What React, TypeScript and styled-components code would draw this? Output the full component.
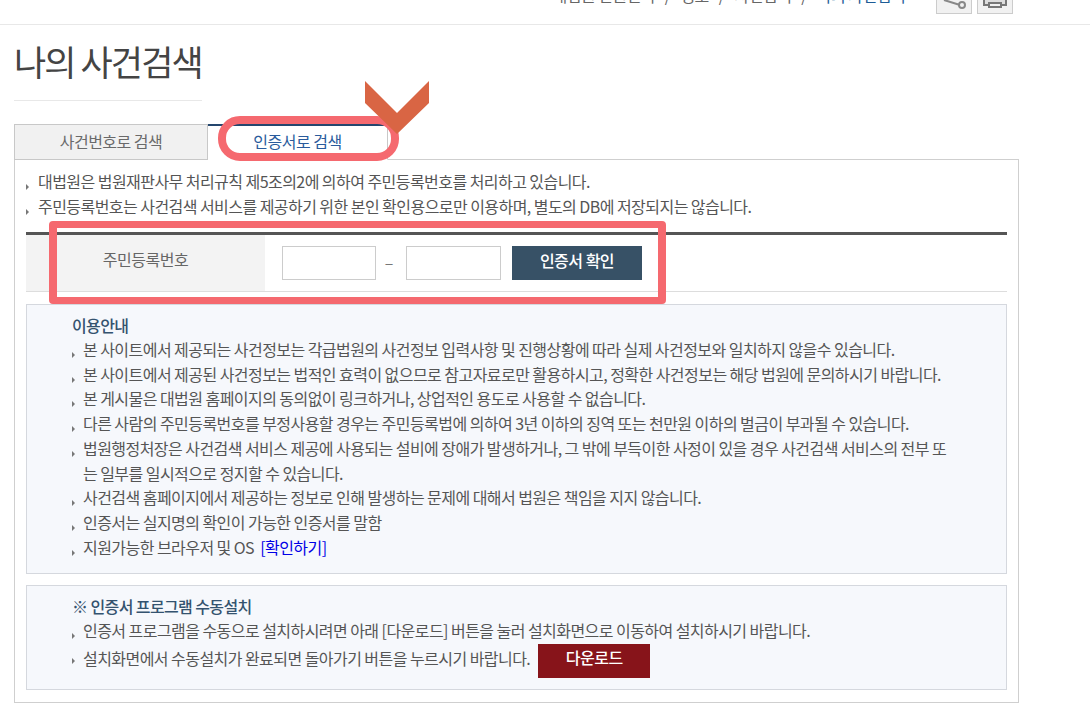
import React from "react";
import styled, { createGlobalStyle } from "styled-components";

const GlobalStyle = createGlobalStyle`
  html, body {
    margin: 0;
    padding: 0;
    background: #fff;
    overflow: hidden;
  }
  body {
    font-family: "Noto Sans CJK KR", "Noto Sans", sans-serif;
    color: #555;
  }
  * { box-sizing: border-box; }
`;

const Page = styled.div`
  position: relative;
  width: 1090px;
  height: 720px;
  overflow: hidden;
`;

const TopBar = styled.div`
  height: 25px;
  border-bottom: 1px solid #e8e8e8;
  padding: 0 77px 10px 0;
  display: flex;
  justify-content: flex-end;
  align-items: flex-end;
  overflow: hidden;
`;

const Crumbs = styled.div`
  display: flex;
  gap: 10px;
  margin: 0 26px 9px 0;
  font-size: 16px;
  line-height: 20px;
  letter-spacing: -0.55px;
  color: #666;
`;

const CrumbNow = styled.span`
  color: #1d5c96;
`;

const IconButton = styled.div`
  width: 36px;
  height: 32px;
  margin-left: 5px;
  flex: none;
  background: #f1f1f1;
  border: 1px solid #ccc;
  display: flex;
  align-items: flex-end;
  justify-content: center;
  padding-bottom: 2px;
`;

const Main = styled.main`
  width: 1005px;
  margin-left: 14px;
`;

const Title = styled.h1`
  width: 188px;
  height: 76px;
  margin: 0 0 23px;
  padding-top: 13px;
  border-bottom: 1px solid #e8e8e8;
  font-size: 35px;
  line-height: 46px;
  font-weight: 400;
  letter-spacing: -1.9px;
  white-space: nowrap;
  color: #444;
`;

const Tabs = styled.div`
  display: flex;
  height: 36px;
  margin-bottom: -1px;
`;

const Tab = styled.div<{ $active?: boolean }>`
  width: ${(p) => (p.$active ? "180px" : "194px")};
  height: 36px;
  display: flex;
  align-items: center;
  justify-content: center;
  padding-bottom: ${(p) => (p.$active ? "4px" : "3px")};
  font-size: 16px;
  letter-spacing: -0.5px;
  color: ${(p) => (p.$active ? "#2a5b9c" : "#6a6a6a")};
  background: ${(p) => (p.$active ? "#fff" : "#f1f1f1")};
  border: 1px solid #c8c8c8;
  border-top: ${(p) => (p.$active ? "2px solid #24466e" : "1px solid #c8c8c8")};
  border-left: ${(p) => (p.$active ? "0" : "1px solid #c8c8c8")};
  border-bottom: ${(p) => (p.$active ? "1px solid #fff" : "1px solid #c8c8c8")};
  position: relative;
  z-index: 1;
`;

const Panel = styled.section`
  height: 544px;
  border: 1px solid #cfcfcf;
  padding: 9px 11px 0;
`;

const List = styled.ul`
  list-style: none;
  margin: 0;
  padding: 0;
`;

const Item = styled.li<{ $gap?: number; $line?: number }>`
  display: flex;
  font-size: 16px;
  line-height: ${(p) => p.$line ?? 24.7}px;
  letter-spacing: -0.55px;
  color: #555;
  white-space: nowrap;

  &::before {
    content: "";
    flex: none;
    width: 0;
    height: 0;
    margin: 15px ${(p) => p.$gap ?? 8}px 0 0;
    border-left: 3px solid #777;
    border-top: 3px solid transparent;
    border-bottom: 3px solid transparent;
  }
`;

const FormRow = styled.div`
  display: flex;
  height: 60px;
  margin-top: 13px;
  border-top: 3px solid #555;
  border-bottom: 1px solid #ddd;
`;

const RowHead = styled.div`
  width: 239px;
  display: flex;
  align-items: center;
  justify-content: center;
  padding-bottom: 8px;
  background: #f3f3f3;
  font-size: 16px;
  letter-spacing: -0.5px;
  color: #666;
`;

const RowBody = styled.div`
  display: flex;
  align-items: center;
  padding: 0 0 0 17px;
`;

const NumberInput = styled.input<{ $w: number }>`
  width: ${(p) => p.$w}px;
  height: 34px;
  background: #fff;
  border: 1px solid #ccc;
  outline: none;
`;

const Dash = styled.span`
  width: 30px;
  padding: 0 4px 2px 0;
  text-align: center;
  font-size: 16px;
  color: #777;
`;

const DarkButton = styled.button<{ $bg: string; $w: number }>`
  width: ${(p) => p.$w}px;
  height: 34px;
  border: 0;
  padding: 0 0 7px;
  background: ${(p) => p.$bg};
  color: #fff;
  font-family: inherit;
  font-size: 16px;
  font-weight: 500;
  letter-spacing: -0.5px;
`;

const ConfirmButton = styled(DarkButton)`
  margin-left: 11px;
`;

const InfoBox = styled.div<{ $h: number }>`
  height: ${(p) => p.$h}px;
  background: #f6f8fc;
  border: 1px solid #d5d8de;
  padding: 8px 0 0 45px;
  margin-top: ${(p) => (p.$h > 200 ? "12px" : "11px")};
`;

const BoxTitle = styled.h3`
  margin: 0;
  font-size: 16px;
  line-height: 24px;
  font-weight: 500;
  letter-spacing: -0.6px;
  color: #34536f;
`;

const SourceLink = styled.a`
  margin-left: 6px;
  color: #0000e6;
  text-decoration: none;
`;

const InlineButtonRow = styled.div`
  display: flex;
  align-items: flex-start;
  height: 34px;
`;

const InlineText = styled.span`
  padding-top: 3px;
`;

const DownloadButton = styled(DarkButton)`
  margin: 1px 0 0 8px;
`;

const TabMark = styled.div`
  position: absolute;
  left: 218px;
  top: 116px;
  width: 181px;
  height: 45px;
  border: 8px solid #f5696f;
  border-radius: 22px;
  z-index: 2;
`;

const RowMark = styled.div`
  position: absolute;
  left: 49px;
  top: 221px;
  width: 617px;
  height: 83px;
  border: 7px solid #f5696f;
  border-width: 7px 8px;
  border-radius: 4px;
  z-index: 2;
`;

const Chevron = styled.svg`
  position: absolute;
  left: 365px;
  top: 81px;
  z-index: 3;
`;

const guideItems = [
  "본 사이트에서 제공되는 사건정보는 각급법원의 사건정보 입력사항 및 진행상황에 따라 실제 사건정보와 일치하지 않을수 있습니다.",
  "본 사이트에서 제공된 사건정보는 법적인 효력이 없으므로 참고자료로만 활용하시고, 정확한 사건정보는 해당 법원에 문의하시기 바랍니다.",
  "본 게시물은 대법원 홈페이지의 동의없이 링크하거나, 상업적인 용도로 사용할 수 없습니다.",
  "다른 사람의 주민등록번호를 부정사용할 경우는 주민등록법에 의하여 3년 이하의 징역 또는 천만원 이하의 벌금이 부과될 수 있습니다.",
];

const guideItemsAfter = [
  "사건검색 홈페이지에서 제공하는 정보로 인해 발생하는 문제에 대해서 법원은 책임을 지지 않습니다.",
  "인증서는 실지명의 확인이 가능한 인증서를 말함",
];

const App: React.FC = () => {
  return (
    <Page>
      <GlobalStyle />
      <TopBar>
        <Crumbs>
          <span>대법원 민원센터</span>
          <span>/</span>
          <span>정보</span>
          <span>/</span>
          <span>사건검색</span>
          <span>/</span>
          <CrumbNow>나의 사건검색</CrumbNow>
        </Crumbs>
        <IconButton>
          <svg width="26" height="12" viewBox="0 0 26 12" fill="none" stroke="#888" strokeWidth="2">
            <path d="M3 1 L19 6" />
            <circle cx="21" cy="6" r="3" fill="#f1f1f1" />
          </svg>
        </IconButton>
        <IconButton>
          <svg width="24" height="12" viewBox="0 0 24 12" fill="none" stroke="#777" strokeWidth="2">
            <path d="M1 0 V6 H23 V0" fill="#ddd" />
            <rect x="6" y="4" width="12" height="4" fill="#f1f1f1" />
          </svg>
        </IconButton>
      </TopBar>

      <Main>
        <Title>나의 사건검색</Title>
        <Tabs>
          <Tab>사건번호로 검색</Tab>
          <Tab $active>인증서로 검색</Tab>
        </Tabs>
        <Panel>
          <List>
            <Item $line={25} $gap={9}>대법원은 법원재판사무 처리규칙 제5조의2에 의하여 주민등록번호를 처리하고 있습니다.</Item>
            <Item $line={25} $gap={9}>주민등록번호는 사건검색 서비스를 제공하기 위한 본인 확인용으로만 이용하며, 별도의 DB에 저장되지는 않습니다.</Item>
          </List>
          <FormRow>
            <RowHead>주민등록번호</RowHead>
            <RowBody>
              <NumberInput $w={94} />
              <Dash>–</Dash>
              <NumberInput $w={95} />
              <ConfirmButton $bg="#375166" $w={130}>인증서 확인</ConfirmButton>
            </RowBody>
          </FormRow>

          <InfoBox $h={270}>
            <BoxTitle>이용안내</BoxTitle>
            <List>
              {guideItems.map((text) => (
                <Item key={text}>{text}</Item>
              ))}
              <Item>
                <span>
                  법원행정처장은 사건검색 서비스 제공에 사용되는 설비에 장애가 발생하거나, 그 밖에 부득이한 사정이 있을 경우 사건검색 서비스의 전부 또
                  <br />는 일부를 일시적으로 정지할 수 있습니다.
                </span>
              </Item>
              {guideItemsAfter.map((text) => (
                <Item key={text}>{text}</Item>
              ))}
              <Item>
                <span>
                  지원가능한 브라우저 및 OS
                  <SourceLink href="#">[확인하기]</SourceLink>
                </span>
              </Item>
            </List>
          </InfoBox>

          <InfoBox $h={105}>
            <BoxTitle>※ 인증서 프로그램 수동설치</BoxTitle>
            <List>
              <Item>인증서 프로그램을 수동으로 설치하시려면 아래 [다운로드] 버튼을 눌러 설치화면으로 이동하여 설치하시기 바랍니다.</Item>
              <Item $line={24}>
                <InlineButtonRow>
                  <InlineText>설치화면에서 수동설치가 완료되면 돌아가기 버튼을 누르시기 바랍니다.</InlineText>
                  <DownloadButton $bg="#87141a" $w={112}>다운로드</DownloadButton>
                </InlineButtonRow>
              </Item>
            </List>
          </InfoBox>
        </Panel>
      </Main>

      <TabMark />
      <RowMark />
      <Chevron width="64" height="53" viewBox="0 0 64 53">
        <polygon points="0,0 32,32 64,0 64,22 32,53 0,22" fill="#d96544" />
      </Chevron>
    </Page>
  );
};

export default App;
